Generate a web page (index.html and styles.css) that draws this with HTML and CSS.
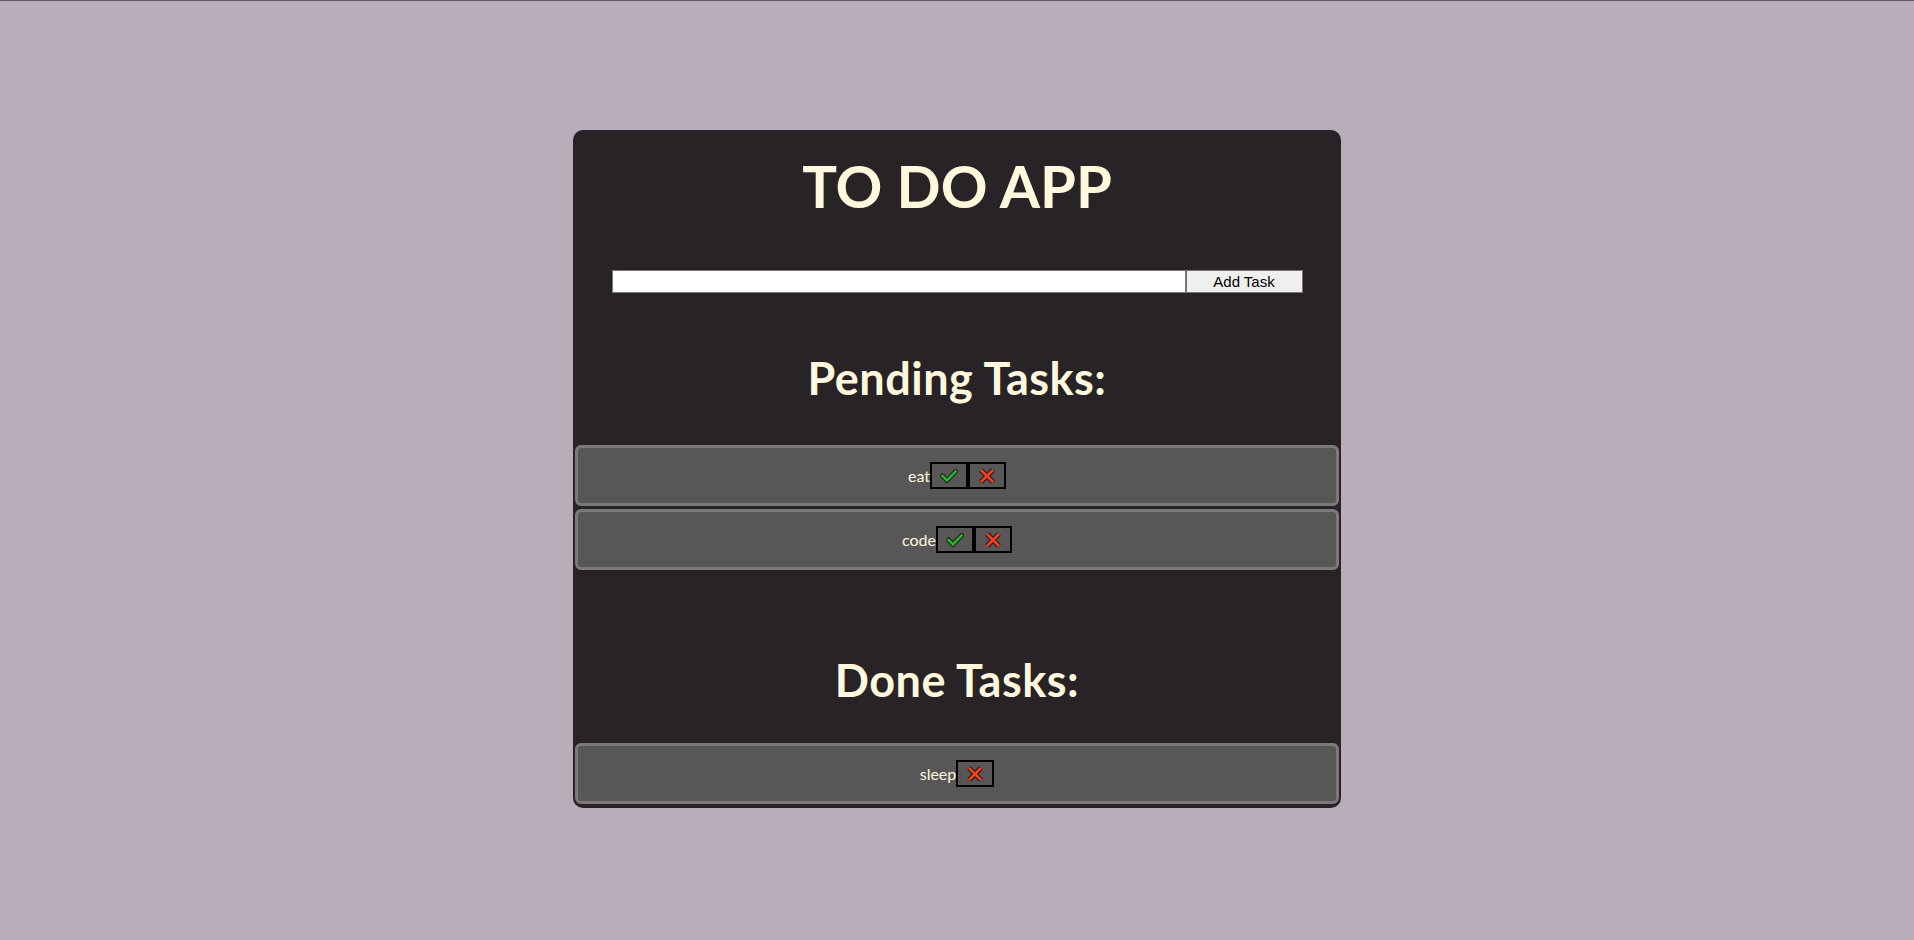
FILE: index.html
```html
<!DOCTYPE html>
<html lang="en">
<head>
    <meta charset="UTF-8">
    <meta name="viewport" content="width=device-width, initial-scale=1.0">
    <title>To Do App</title>
    <link rel="stylesheet" href="styles.css">
</head>
<body>
    <div class="todo-app">
        <h1 class="app-title">TO DO APP</h1>

        <form class="task-form">
            <input type="text" class="task-input">
            <button type="button" class="add-button">Add Task</button>
        </form>

        <h2 class="section-title">Pending Tasks:</h2>
        <ul class="task-list pending">
            <li class="task">
                <span class="task-name">eat</span>
                <button type="button" class="task-btn done-btn">
                    <svg width="18" height="14" viewBox="0 0 18 14"><path d="M2.5 7 L7 11.5 L15.5 2.5" fill="none" stroke="#1c1a1c" stroke-width="4.6" stroke-linecap="square"/><path d="M2.5 7 L7 11.5 L15.5 2.5" fill="none" stroke="#25b626" stroke-width="2.6" stroke-linecap="square"/></svg>
                </button>
                <button type="button" class="task-btn delete-btn">
                    <svg width="18" height="16" viewBox="0 0 18 16"><path d="M3 2 L15 14 M15 2 L3 14" fill="none" stroke="#1c1a1c" stroke-width="5"/><path d="M3 2 L15 14 M15 2 L3 14" fill="none" stroke="#f2401c" stroke-width="2.8"/></svg>
                </button>
            </li>
            <li class="task">
                <span class="task-name">code</span>
                <button type="button" class="task-btn done-btn">
                    <svg width="18" height="14" viewBox="0 0 18 14"><path d="M2.5 7 L7 11.5 L15.5 2.5" fill="none" stroke="#1c1a1c" stroke-width="4.6" stroke-linecap="square"/><path d="M2.5 7 L7 11.5 L15.5 2.5" fill="none" stroke="#25b626" stroke-width="2.6" stroke-linecap="square"/></svg>
                </button>
                <button type="button" class="task-btn delete-btn">
                    <svg width="18" height="16" viewBox="0 0 18 16"><path d="M3 2 L15 14 M15 2 L3 14" fill="none" stroke="#1c1a1c" stroke-width="5"/><path d="M3 2 L15 14 M15 2 L3 14" fill="none" stroke="#f2401c" stroke-width="2.8"/></svg>
                </button>
            </li>
        </ul>

        <h2 class="section-title done-title">Done Tasks:</h2>
        <ul class="task-list done">
            <li class="task">
                <span class="task-name">sleep</span>
                <button type="button" class="task-btn delete-btn">
                    <svg width="18" height="16" viewBox="0 0 18 16"><path d="M3 2 L15 14 M15 2 L3 14" fill="none" stroke="#1c1a1c" stroke-width="5"/><path d="M3 2 L15 14 M15 2 L3 14" fill="none" stroke="#f2401c" stroke-width="2.8"/></svg>
                </button>
            </li>
        </ul>
    </div>
</body>
</html>
```

FILE: styles.css
```css
body {
    margin: 0;
    min-height: 100vh;
    box-sizing: border-box;
    border-top: 1px solid #5c5a5e;
    background-color: #b8adb9;
    font-family: Lato, "Open Sans", sans-serif;
}

.todo-app {
    width: 768px;
    margin: 129px auto 0;
    padding-bottom: 4px;
    background-color: #272327;
    border-radius: 10px;
    overflow: hidden;
}

.app-title {
    margin: 0;
    padding-top: 21px;
    font-size: 58px;
    line-height: 70px;
    text-align: center;
    color: #fff8dc;
}

.task-form {
    display: flex;
    width: 691px;
    margin: 49px auto 0;
}

.task-input {
    flex: 1;
    height: 23px;
    box-sizing: border-box;
    margin: 0;
    border: 1px solid #767676;
    background: #fff;
}

.add-button {
    width: 117px;
    height: 23px;
    box-sizing: border-box;
    margin: 0;
    border: 1px solid #767676;
    background-color: #efefef;
    color: #000;
    font-family: "Liberation Sans", Arial, sans-serif;
    font-size: 15px;
}

.section-title {
    margin: 58px 0 0;
    font-size: 45px;
    line-height: 54px;
    letter-spacing: 0.5px;
    text-align: center;
    color: #fff8dc;
}

.done-title {
    margin-top: 83px;
}

.task-list {
    display: flex;
    flex-direction: column;
    gap: 3px;
    list-style: none;
    margin: 40px 2px 0;
    padding: 0;
}

.task-list.done {
    margin-top: 36px;
}

.task {
    display: flex;
    justify-content: center;
    align-items: center;
    height: 61px;
    box-sizing: border-box;
    border: 3px solid #7b7a7b;
    border-radius: 6px;
    background-color: #585657;
    color: #fff8dc;
    font-size: 16px;
}

.task-btn {
    display: flex;
    justify-content: center;
    align-items: center;
    width: 38px;
    height: 27px;
    box-sizing: border-box;
    padding: 0;
    margin: 0;
    border: 2px solid #000;
    background: transparent;
    cursor: pointer;
}
```
